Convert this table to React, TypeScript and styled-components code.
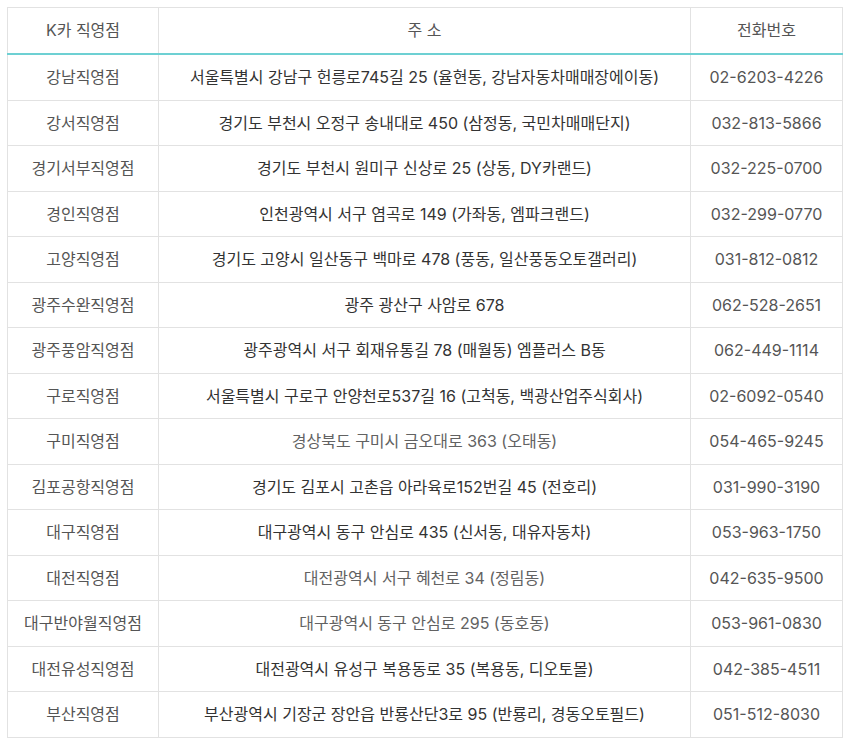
import React from 'react';
import styled, { createGlobalStyle } from 'styled-components';

const GlobalStyle = createGlobalStyle`
  body {
    margin: 0;
    background: #fff;
    font-family: 'Inter', 'Noto Sans CJK KR', sans-serif;
  }
`;

type Branch = {
  name: string;
  address: string;
  phone: string;
  muted?: boolean;
};

const branches: Branch[] = [
  { name: '강남직영점', address: '서울특별시 강남구 헌릉로745길 25 (율현동, 강남자동차매매장에이동)', phone: '02-6203-4226' },
  { name: '강서직영점', address: '경기도 부천시 오정구 송내대로 450 (삼정동, 국민차매매단지)', phone: '032-813-5866' },
  { name: '경기서부직영점', address: '경기도 부천시 원미구 신상로 25 (상동, DY카랜드)', phone: '032-225-0700' },
  { name: '경인직영점', address: '인천광역시 서구 염곡로 149 (가좌동, 엠파크랜드)', phone: '032-299-0770' },
  { name: '고양직영점', address: '경기도 고양시 일산동구 백마로 478 (풍동, 일산풍동오토갤러리)', phone: '031-812-0812' },
  { name: '광주수완직영점', address: '광주 광산구 사암로 678', phone: '062-528-2651' },
  { name: '광주풍암직영점', address: '광주광역시 서구 회재유통길 78 (매월동) 엠플러스 B동', phone: '062-449-1114' },
  { name: '구로직영점', address: '서울특별시 구로구 안양천로537길 16 (고척동, 백광산업주식회사)', phone: '02-6092-0540' },
  { name: '구미직영점', address: '경상북도 구미시 금오대로 363 (오태동)', phone: '054-465-9245', muted: true },
  { name: '김포공항직영점', address: '경기도 김포시 고촌읍 아라육로152번길 45 (전호리)', phone: '031-990-3190' },
  { name: '대구직영점', address: '대구광역시 동구 안심로 435 (신서동, 대유자동차)', phone: '053-963-1750' },
  { name: '대전직영점', address: '대전광역시 서구 혜천로 34 (정림동)', phone: '042-635-9500', muted: true },
  { name: '대구반야월직영점', address: '대구광역시 동구 안심로 295 (동호동)', phone: '053-961-0830', muted: true },
  { name: '대전유성직영점', address: '대전광역시 유성구 복용동로 35 (복용동, 디오토몰)', phone: '042-385-4511' },
  { name: '부산직영점', address: '부산광역시 기장군 장안읍 반룡산단3로 95 (반룡리, 경동오토필드)', phone: '051-512-8030' },
];

const Page = styled.div`
  padding: 7px 0 0 7px;
`;

const Table = styled.table`
  width: 835px;
  border-collapse: collapse;
  table-layout: fixed;
  font-size: 16px;
  color: #555;
`;

const Col = styled.col<{ $w: number }>`
  width: ${({ $w }) => $w}px;
`;

const HeadCell = styled.th`
  padding: 12px 0;
  line-height: 21px;
  font-weight: 400;
  text-align: center;
  border: 1px solid #e2e2e2;
  border-bottom: 2px solid #6dd0d3;
`;

const Cell = styled.td<{ $tone?: 'dark' | 'muted' }>`
  padding: 12px 0;
  line-height: 20.5px;
  text-align: center;
  white-space: nowrap;
  border: 1px solid #e2e2e2;
  color: ${({ $tone }) => ($tone === 'dark' ? '#333' : $tone === 'muted' ? '#626262' : '#555')};
`;

export default function App() {
  return (
    <Page>
      <GlobalStyle />
      <Table>
        <colgroup>
          <Col $w={151} />
          <Col $w={532} />
          <Col $w={152} />
        </colgroup>
        <thead>
          <tr>
            <HeadCell>K카 직영점</HeadCell>
            <HeadCell>주 소</HeadCell>
            <HeadCell>전화번호</HeadCell>
          </tr>
        </thead>
        <tbody>
          {branches.map((b) => (
            <tr key={b.name}>
              <Cell>{b.name}</Cell>
              <Cell $tone={b.muted ? 'muted' : 'dark'}>{b.address}</Cell>
              <Cell>{b.phone}</Cell>
            </tr>
          ))}
        </tbody>
      </Table>
    </Page>
  );
}
